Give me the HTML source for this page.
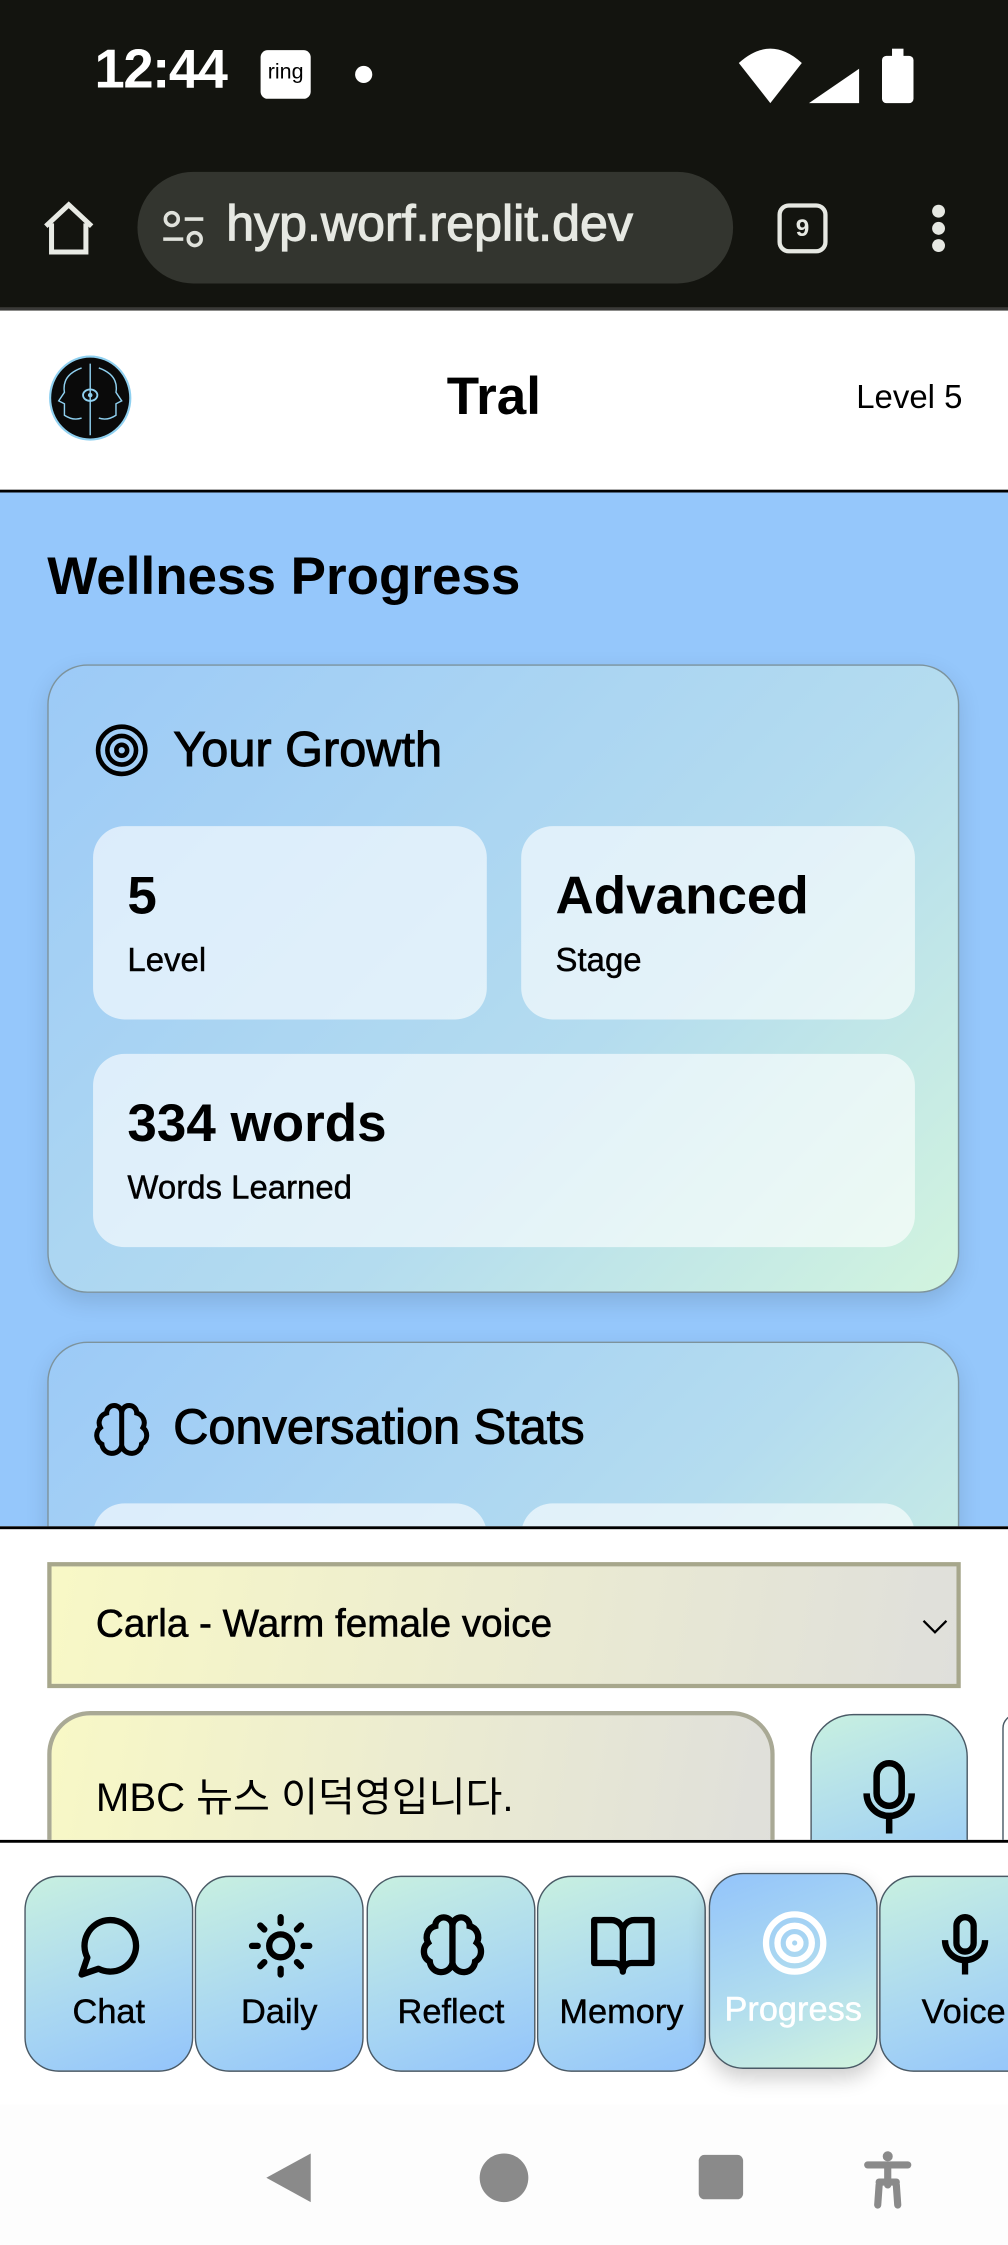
<!DOCTYPE html>
<html><head><meta charset="utf-8"><style>
*{box-sizing:border-box;margin:0;padding:0}
html,body{width:1008px;height:2244px;overflow:hidden;background:#fff}
#w{position:absolute;left:0;top:0;width:704px;height:1568px;transform:scale(1.431818);transform-origin:0 0;font-family:"Liberation Sans","Noto Sans CJK KR",sans-serif;color:#000}
.a{position:absolute}
.card{position:absolute;left:33px;width:637px;border-radius:28px;border:1.5px solid #7d939c;background:linear-gradient(135deg,#9ccaf7 0%,#b4dcef 60%,#d2f4de 100%);box-shadow:0 6px 16px rgba(0,0,0,.12)}
.tile{position:absolute;border-radius:22px;background:rgba(255,255,255,.62)}
.tile b{position:absolute;left:24px;top:28px;font-size:37px}
.tile span{position:absolute;left:24px;top:80px;font-size:23px;-webkit-text-stroke:.3px #000}
.h{-webkit-text-stroke:.7px #000}
.nb{position:absolute;top:1310px;width:118px;height:137px;border-radius:24px;border:1.5px solid #4a5a66;background:linear-gradient(160deg,#c8f0e0,#a8d6f2 60%,#93c4fb);text-align:center;font-size:24px;-webkit-text-stroke:.3px #000}
.nb svg{position:absolute;left:35px;top:24px}
.nb div{position:absolute;left:0;right:0;top:81px}
</style></head><body><div id="w">
<div class="a" style="left:0;top:0;width:704px;height:215px;background:#13140f"></div>
<div class="a" style="left:66px;top:28px;color:#fff;font-size:38px;font-weight:bold;letter-spacing:-1px">12:44</div>
<div class="a" style="left:182px;top:35px;width:35px;height:34px;border-radius:5px;background:#fff;color:#000;font-size:15px;text-align:center;line-height:32px">ring</div>
<div class="a" style="left:248px;top:46px;width:12px;height:12px;border-radius:50%;background:#fff"></div>
<svg class="a" style="left:514px;top:30px" width="130" height="44"><path d="M2 14 Q24 -6 46 14 L24 42Z" fill="#fff"/><path d="M51 42 L86 18 L86 42Z" fill="#fff"/><rect x="102" y="9" width="22" height="33" rx="3" fill="#fff"/><rect x="109" y="4" width="8" height="6" fill="#fff"/></svg>
<svg class="a" style="left:28px;top:140px" width="40" height="40"><path d="M4 18 L20 3 L36 18 M8 16 V36 H32 V16" fill="none" stroke="#e8eae4" stroke-width="3.5"/></svg>
<div class="a" style="left:96px;top:120px;width:416px;height:78px;border-radius:39px;background:#33352f"></div>
<svg class="a" style="left:112px;top:146px" width="34" height="30"><circle cx="8" cy="7" r="4.5" fill="none" stroke="#e0e2dc" stroke-width="2.5"/><line x1="17" y1="7" x2="30" y2="7" stroke="#e0e2dc" stroke-width="2.5"/><circle cx="24" cy="21" r="4.5" fill="none" stroke="#e0e2dc" stroke-width="2.5"/><line x1="2" y1="21" x2="16" y2="21" stroke="#e0e2dc" stroke-width="2.5"/></svg>
<div class="a" style="left:158px;top:137px;color:#e6e8e2;font-size:35px;-webkit-text-stroke:.8px #e6e8e2">hyp.worf.replit.dev</div>
<div class="a" style="left:543px;top:142px;width:35px;height:35px;border:3px solid #e6e8e2;border-radius:8px;color:#e6e8e2;font-size:17px;text-align:center;line-height:29px;font-weight:bold">9</div>
<div class="a" style="left:651px;top:143px;width:9px;height:9px;border-radius:50%;background:#e6e8e2;box-shadow:0 12px 0 #e6e8e2,0 24px 0 #e6e8e2"></div>
<div class="a" style="left:0;top:215px;width:704px;height:2px;background:#3a3a38"></div>
<div class="a" style="left:0;top:217px;width:704px;height:127px;background:#fff;border-bottom:2px solid #000"></div>
<svg class="a" style="left:33px;top:248px" width="62" height="62"><ellipse cx="30" cy="30" rx="28" ry="29" fill="#0a0a0a" stroke="#8fd0f0" stroke-width="1.5"/><path d="M30 6 V56 M24 9 Q10 14 12 26 L8 32 L12 34 L12 42 Q18 46 24 44 M36 9 Q50 14 48 26 L52 32 L48 34 L48 42 Q42 46 36 44" fill="none" stroke="#8fd0f0" stroke-width="1"/><ellipse cx="30" cy="28" rx="5" ry="4" fill="none" stroke="#8fd0f0" stroke-width="1.3"/><circle cx="30" cy="28" r="1.6" fill="#8fd0f0"/></svg>
<div class="a" style="left:312px;top:256px;font-size:37px;font-weight:bold">Tral</div>
<div class="a" style="left:598px;top:264px;font-size:23px">Level 5</div>
<div class="a" style="left:0;top:344px;width:704px;height:722px;background:#95c7fb;overflow:hidden">
<div class="a" style="left:33px;top:38px;font-size:37px;font-weight:bold">Wellness Progress</div>
<div class="card" style="top:120px;height:439px">
<svg class="a" style="left:32px;top:40px" width="38" height="38"><g fill="none" stroke="#000" stroke-width="3.2"><circle cx="19" cy="19" r="16.5"/><circle cx="19" cy="19" r="10"/><circle cx="19" cy="19" r="3.8"/></g></svg>
<div class="a h" style="left:87px;top:40px;font-size:34px">Your Growth</div>
<div class="tile" style="left:31px;top:112px;width:275px;height:135px"><b>5</b><span>Level</span></div>
<div class="tile" style="left:330px;top:112px;width:275px;height:135px"><b>Advanced</b><span>Stage</span></div>
<div class="tile" style="left:31px;top:271px;width:574px;height:135px"><b>334 words</b><span>Words Learned</span></div>
</div>
<div class="card" style="top:593px;height:300px">
<svg class="a" style="left:30px;top:40px" width="42" height="42" viewBox="0 0 24 24"><path d="M12 5a3 3 0 1 0-6 .1 4 4 0 0 0-2.5 5.8 4 4 0 0 0 .6 6.6A4 4 0 0 0 12 18Z M12 5a3 3 0 1 1 6 .1 4 4 0 0 1 2.5 5.8 4 4 0 0 1-.6 6.6A4 4 0 0 1 12 18Z M12 5v13" fill="none" stroke="#000" stroke-width="2"/></svg>
<div class="a h" style="left:87px;top:40px;font-size:34px">Conversation Stats</div>
<div class="tile" style="left:31px;top:112px;width:275px;height:135px"></div>
<div class="tile" style="left:330px;top:112px;width:275px;height:135px"></div>
</div>
</div>
<div class="a" style="left:0;top:1066px;width:704px;height:221px;background:#fff;border-top:2px solid #000;border-bottom:2px solid #000;overflow:hidden">
<div class="a" style="left:33px;top:23px;width:638px;height:88px;border:3px solid #a7a78c;background:linear-gradient(100deg,#f8f8c6,#dfdfdb)"></div>
<div class="a" style="left:67px;top:51px;font-size:27px;-webkit-text-stroke:.4px #000">Carla - Warm female voice</div>
<svg class="a" style="left:643px;top:61px" width="20" height="14"><path d="M2 3 L10 11 L18 3" fill="none" stroke="#000" stroke-width="1.6"/></svg>
<div class="a" style="left:33px;top:127px;width:508px;height:130px;border-radius:30px;border:3px solid #a9a995;background:linear-gradient(100deg,#f8f8c6,#dfdfdb)"></div>
<div class="a" style="left:67px;top:166px;font-size:28px">MBC 뉴스 이덕영입니다.</div>
<div class="a" style="left:566px;top:129px;width:110px;height:130px;border-radius:30px;border:1.5px solid #4a5a66;background:linear-gradient(160deg,#c8f0e0,#95c7fb)"></div>
<svg class="a" style="left:600px;top:160px" width="42" height="56" viewBox="0 0 24 32"><rect x="7" y="2" width="10" height="17" rx="5" fill="none" stroke="#000" stroke-width="2.6"/><path d="M3 14a9 9 0 0 0 18 0 M12 23v7" fill="none" stroke="#000" stroke-width="2.6"/></svg>
<div class="a" style="left:700px;top:129px;width:20px;height:130px;border-radius:20px;border:1.5px solid #4a5a66"></div>
</div>
<div class="nb" style="left:17px"><svg width="48" height="48" viewBox="0 0 24 24"><path d="M7.9 20A9 9 0 1 0 4 16.1L2 22Z" fill="none" stroke="#000" stroke-width="2.2" stroke-linejoin="round"/></svg><div>Chat</div></div>
<div class="nb" style="left:136px"><svg width="48" height="48" viewBox="0 0 24 24"><g fill="none" stroke="#000" stroke-width="2.2" stroke-linecap="round"><circle cx="12" cy="12" r="4"/><path d="M12 2v2M12 20v2M4.9 4.9l1.4 1.4M17.7 17.7l1.4 1.4M2 12h2M20 12h2M6.3 17.7l-1.4 1.4M19.1 4.9l-1.4 1.4"/></g></svg><div>Daily</div></div>
<div class="nb" style="left:256px"><svg width="48" height="48" viewBox="0 0 24 24"><path d="M12 5a3 3 0 1 0-6 .1 4 4 0 0 0-2.5 5.8 4 4 0 0 0 .6 6.6A4 4 0 0 0 12 18Z M12 5a3 3 0 1 1 6 .1 4 4 0 0 1 2.5 5.8 4 4 0 0 1-.6 6.6A4 4 0 0 1 12 18Z M12 5v13" fill="none" stroke="#000" stroke-width="2.2"/></svg><div>Reflect</div></div>
<div class="nb" style="left:375px"><svg width="48" height="48" viewBox="0 0 24 24"><path d="M2 3h6a4 4 0 0 1 4 4v14a3 3 0 0 0-3-3H2Z M22 3h-6a4 4 0 0 0-4 4v14a3 3 0 0 1 3-3h7Z" fill="none" stroke="#000" stroke-width="2.2" stroke-linejoin="round"/></svg><div>Memory</div></div>
<div class="nb" style="left:495px;top:1308px;background:linear-gradient(160deg,#93c4fb,#b0dcef 55%,#d2f4de);box-shadow:0 6px 14px rgba(0,0,0,.2);color:#fff;-webkit-text-stroke:.3px #fff"><svg width="48" height="48" viewBox="0 0 24 24"><g fill="none" stroke="#fff" stroke-width="2.2"><circle cx="12" cy="12" r="10"/><circle cx="12" cy="12" r="6"/><circle cx="12" cy="12" r="2"/></g></svg><div>Progress</div></div>
<div class="nb" style="left:614px"><svg width="48" height="48" viewBox="0 0 24 24"><rect x="9" y="2" width="6" height="12" rx="3" fill="none" stroke="#000" stroke-width="2.2"/><path d="M5 10a7 7 0 0 0 14 0 M12 17v5" fill="none" stroke="#000" stroke-width="2.2"/></svg><div>Voice</div></div>
<div class="a" style="left:0;top:1470px;width:704px;height:98px;background:#fdfdfd"></div>
<svg class="a" style="left:180px;top:1500px" width="470" height="44"><path d="M37 4 V38 L6 21Z" fill="#8a8a8a"/><circle cx="172" cy="21" r="17" fill="#8a8a8a"/><rect x="308" y="5" width="31" height="31" rx="4" fill="#8a8a8a"/><circle cx="440" cy="6" r="3.5" fill="#8a8a8a"/><path d="M426 12 H454 M440 12 V26 M434 26 L433 40 M446 26 L447 40 M434 24h12" fill="none" stroke="#8a8a8a" stroke-width="5" stroke-linecap="round"/></svg>
</div></body></html>
